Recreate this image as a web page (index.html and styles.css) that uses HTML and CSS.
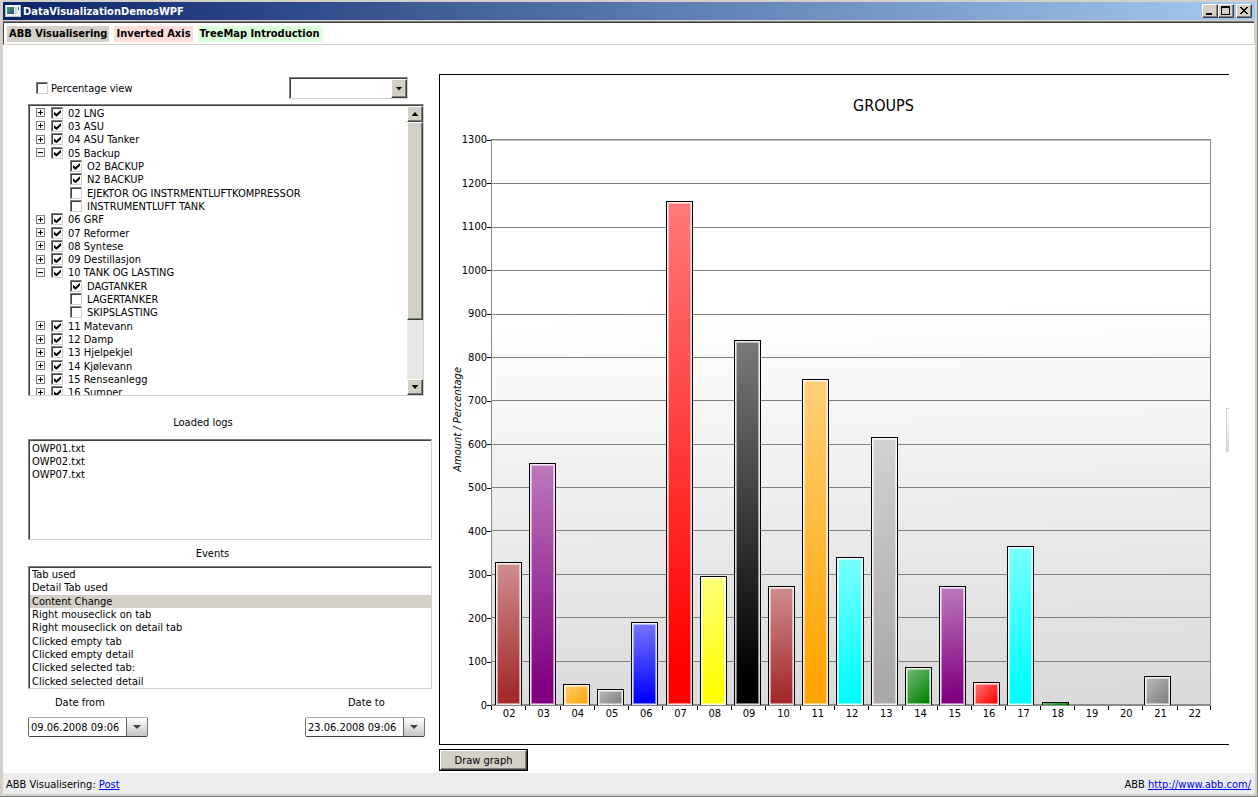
FILE: index.html
```html
<!DOCTYPE html>
<html lang="no">
<head>
<meta charset="utf-8">
<title>DataVisualizationDemosWPF</title>
<link rel="stylesheet" href="styles.css">
</head>
<body>
<div class="window">
  <header class="titlebar">
    <svg class="app-icon" width="16" height="12" viewBox="0 0 16 12" shape-rendering="crispEdges" aria-hidden="true">
      <defs><linearGradient id="pane" x1="0" y1="0" x2="1" y2="1"><stop offset="0" stop-color="#4aa070"/><stop offset="1" stop-color="#1f4f86"/></linearGradient></defs>
      <rect width="16" height="12" fill="#f4f4f4"/>
      <path d="M0 11.500H16M15.500 0V12M0.500 0V12" stroke="#c4c4c4"/>
      <rect x="2" y="2" width="7" height="7" fill="url(#pane)"/>
      <rect x="10" y="2" width="2" height="7" fill="#c9d6e4"/>
      <rect x="13" y="2" width="1" height="3" fill="#3569a8"/>
    </svg>
    <h1 class="title">DataVisualizationDemosWPF</h1>
    <button class="win-btn" type="button" aria-label="Minimize"><svg width="12" height="10" shape-rendering="crispEdges"><rect x="2" y="7" width="6" height="2"/></svg></button>
    <button class="win-btn" type="button" aria-label="Maximize"><svg width="12" height="10" shape-rendering="crispEdges"><path d="M1 0h9v9h-9zM2 2v6h7v-6z" fill-rule="evenodd"/></svg></button>
    <button class="win-btn win-close" type="button" aria-label="Close"><svg width="12" height="10" shape-rendering="crispEdges"><path d="M2 1h2v1h1v1h2v-1h1v-1h2v1h-1v1h-1v1h-1v1h1v1h1v1h1v1h-2v-1h-1v-1h-2v1h-1v1h-2v-1h1v-1h1v-1h1v-1h-1v-1h-1v-1h-1z"/></svg></button>
  </header>

  <nav class="tabs">
    <button class="tab tab-active" type="button">ABB Visualisering</button>
    <button class="tab tab-pink" type="button">Inverted Axis</button>
    <button class="tab tab-green" type="button">TreeMap Introduction</button>
  </nav>

  <main class="main">
    <section class="side">
      <div class="options">
        <label class="option"><input class="check" type="checkbox"><span class="option-text">Percentage view</span></label>
        <div class="combo sunken">
          <select class="combo-select" aria-label="Series"><option></option></select>
          <span class="combo-arrow raised"><i class="arrow arrow-down"></i></span>
        </div>
      </div>

      <div class="tree sunken">
        <ul class="tree-list">
          <li class="node"><button class="expander plus" type="button" aria-label="Expand"></button><label class="node-label"><input class="check" type="checkbox" checked>02 LNG</label></li>
          <li class="node"><button class="expander plus" type="button" aria-label="Expand"></button><label class="node-label"><input class="check" type="checkbox" checked>03 ASU</label></li>
          <li class="node"><button class="expander plus" type="button" aria-label="Expand"></button><label class="node-label"><input class="check" type="checkbox" checked>04 ASU Tanker</label></li>
          <li class="node"><button class="expander" type="button" aria-label="Collapse"></button><label class="node-label"><input class="check" type="checkbox" checked>05 Backup</label></li>
          <li class="node child"><label class="node-label"><input class="check" type="checkbox" checked>O2 BACKUP</label></li>
          <li class="node child"><label class="node-label"><input class="check" type="checkbox" checked>N2 BACKUP</label></li>
          <li class="node child"><label class="node-label"><input class="check" type="checkbox">EJEKTOR OG INSTRMENTLUFTKOMPRESSOR</label></li>
          <li class="node child"><label class="node-label"><input class="check" type="checkbox">INSTRUMENTLUFT TANK</label></li>
          <li class="node"><button class="expander plus" type="button" aria-label="Expand"></button><label class="node-label"><input class="check" type="checkbox" checked>06 GRF</label></li>
          <li class="node"><button class="expander plus" type="button" aria-label="Expand"></button><label class="node-label"><input class="check" type="checkbox" checked>07 Reformer</label></li>
          <li class="node"><button class="expander plus" type="button" aria-label="Expand"></button><label class="node-label"><input class="check" type="checkbox" checked>08 Syntese</label></li>
          <li class="node"><button class="expander plus" type="button" aria-label="Expand"></button><label class="node-label"><input class="check" type="checkbox" checked>09 Destillasjon</label></li>
          <li class="node"><button class="expander" type="button" aria-label="Collapse"></button><label class="node-label"><input class="check" type="checkbox" checked>10 TANK OG LASTING</label></li>
          <li class="node child"><label class="node-label"><input class="check" type="checkbox" checked>DAGTANKER</label></li>
          <li class="node child"><label class="node-label"><input class="check" type="checkbox">LAGERTANKER</label></li>
          <li class="node child"><label class="node-label"><input class="check" type="checkbox">SKIPSLASTING</label></li>
          <li class="node"><button class="expander plus" type="button" aria-label="Expand"></button><label class="node-label"><input class="check" type="checkbox" checked>11 Matevann</label></li>
          <li class="node"><button class="expander plus" type="button" aria-label="Expand"></button><label class="node-label"><input class="check" type="checkbox" checked>12 Damp</label></li>
          <li class="node"><button class="expander plus" type="button" aria-label="Expand"></button><label class="node-label"><input class="check" type="checkbox" checked>13 Hjelpekjel</label></li>
          <li class="node"><button class="expander plus" type="button" aria-label="Expand"></button><label class="node-label"><input class="check" type="checkbox" checked>14 Kjølevann</label></li>
          <li class="node"><button class="expander plus" type="button" aria-label="Expand"></button><label class="node-label"><input class="check" type="checkbox" checked>15 Renseanlegg</label></li>
          <li class="node"><button class="expander plus" type="button" aria-label="Expand"></button><label class="node-label"><input class="check" type="checkbox" checked>16 Sumper</label></li>
        </ul>
        <div class="scrollbar">
          <button class="scroll-btn raised" type="button" aria-label="Scroll up"><i class="arrow arrow-up"></i></button>
          <div class="scroll-track"><div class="scroll-thumb raised"></div></div>
          <button class="scroll-btn raised" type="button" aria-label="Scroll down"><i class="arrow arrow-down"></i></button>
        </div>
      </div>

      <h2 class="caption caption-logs">Loaded logs</h2>
      <ul class="list logs sunken">
        <li class="row">OWP01.txt</li>
        <li class="row">OWP02.txt</li>
        <li class="row">OWP07.txt</li>
      </ul>

      <h2 class="caption caption-events">Events</h2>
      <ul class="list events sunken">
        <li class="row">Tab used</li>
        <li class="row">Detail Tab used</li>
        <li class="row selected">Content Change</li>
        <li class="row">Right mouseclick on tab</li>
        <li class="row">Right mouseclick on detail tab</li>
        <li class="row">Clicked empty tab</li>
        <li class="row">Clicked empty detail</li>
        <li class="row">Clicked selected tab:</li>
        <li class="row">Clicked selected detail</li>
      </ul>

      <div class="dates">
        <div class="date">
          <label class="date-label date-label-from" for="from">Date from</label>
          <div class="date-box"><input class="date-input" id="from" type="text" value="09.06.2008 09:06"><button class="date-btn" type="button" aria-label="Choose start date"><i class="date-arrow"></i></button></div>
        </div>
        <div class="date">
          <label class="date-label date-label-to" for="to">Date to</label>
          <div class="date-box"><input class="date-input" id="to" type="text" value="23.06.2008 09:06"><button class="date-btn" type="button" aria-label="Choose end date"><i class="date-arrow"></i></button></div>
        </div>
      </div>
    </section>

    <section class="content">
      <div class="chart">
        <h2 class="chart-title">GROUPS</h2>
        <div class="chart-body">
          <div class="y-title">Amount / Percentage</div>
          <ol class="y-axis">
            <li>1300</li><li>1200</li><li>1100</li><li>1000</li><li>900</li><li>800</li><li>700</li><li>600</li><li>500</li><li>400</li><li>300</li><li>200</li><li>100</li><li>0</li>
          </ol>
          <div class="plot">
            <div class="gridlines"><i></i><i></i><i></i><i></i><i></i><i></i><i></i><i></i><i></i><i></i><i></i><i></i><i></i></div>
            <div class="bars">
              <div class="bar brown" style="--value:330"></div>
              <div class="bar purple" style="--value:557"></div>
              <div class="bar orange short" style="--value:48"></div>
              <div class="bar gray short" style="--value:37"></div>
              <div class="bar blue" style="--value:191"></div>
              <div class="bar red" style="--value:1160"></div>
              <div class="bar yellow" style="--value:297"></div>
              <div class="bar black" style="--value:840"></div>
              <div class="bar brown" style="--value:274"></div>
              <div class="bar orange" style="--value:750"></div>
              <div class="bar cyan" style="--value:341"></div>
              <div class="bar silver" style="--value:617"></div>
              <div class="bar green short" style="--value:88"></div>
              <div class="bar purple" style="--value:274"></div>
              <div class="bar red short" style="--value:53"></div>
              <div class="bar cyan" style="--value:366"></div>
              <div class="bar green sliver" style="--value:6"></div>
              <div class="bar empty"></div>
              <div class="bar empty"></div>
              <div class="bar gray short" style="--value:67"></div>
              <div class="bar empty"></div>
            </div>
          </div>
          <ol class="x-axis">
            <li>02</li><li>03</li><li>04</li><li>05</li><li>06</li><li>07</li><li>08</li><li>09</li><li>10</li><li>11</li><li>12</li><li>13</li><li>14</li><li>15</li><li>16</li><li>17</li><li>18</li><li>19</li><li>20</li><li>21</li><li>22</li>
          </ol>
          <div class="legend-edge"></div>
        </div>
      </div>
      <button class="draw" type="button"><span class="draw-face raised">Draw graph</span></button>
    </section>
  </main>

  <footer class="status">
    <span>ABB Visualisering: <a class="link" href="#post">Post</a></span>
    <span>ABB <a class="link" href="http://www.abb.com/">http://www.abb.com/</a></span>
  </footer>
</div>
</body>
</html>
```

FILE: styles.css
```css
* { box-sizing: border-box; }

body {
  margin: 0;
  font-family: "DejaVu Sans Condensed", "Noto Sans", sans-serif;
  font-size: 11px;
  line-height: 14px;
  color: #000;
  background: #fff;
}

h1, h2, ul, ol { margin: 0; padding: 0; list-style: none; font-weight: normal; }
button, input, select { margin: 0; padding: 0; border: 0; border-radius: 0; font: inherit; color: inherit; }

.window {
  display: flex;
  flex-direction: column;
  min-height: 100vh;
  padding: 2px 2px 2px 3px;
  background: #d4d0c8;
  border-right: 1px solid #808080;
  border-bottom: 1px solid #808080;
}

/* 3D edges */
.sunken {
  border: 1px solid;
  border-color: #808080 #d4d0c8 #d4d0c8 #808080;
  box-shadow: inset 1px 1px 0 #404040;
  padding: 1px 0 0 1px;
  background: #fff;
}
.raised {
  background: #d4d0c8;
  border: 1px solid;
  border-color: #fff #404040 #404040 #fff;
  box-shadow: inset -1px -1px 0 #808080;
}

/* Title bar */
.titlebar {
  display: flex;
  align-items: center;
  height: 18px;
  padding: 0 3px 0 2px;
  background: linear-gradient(90deg, #0a246a, #a6caf0);
}
.app-icon { flex: none; margin-right: 2px; }
.title { flex: 1; padding-top: 2px; font-size: 11px; font-weight: bold; color: #fff; }
.win-btn {
  display: grid;
  place-items: center;
  width: 16px;
  height: 14px;
  background: #d4d0c8;
  border: 1px solid;
  border-color: #fff #404040 #404040 #fff;
  box-shadow: inset -1px -1px 0 #808080;
}
.win-close { margin-left: 2px; }

/* Tabs */
.tabs {
  display: flex;
  gap: 5px;
  height: 24px;
  margin-top: 1px;
  padding: 4px 3px 2px;
  background: #fff;
  border: 1px solid;
  border-color: #808080 #d4d0c8 #d4d0c8 #404040;
  box-shadow: inset 0 1px 0 #404040;
}
.tab { height: 16px; padding: 0 2px; font-weight: bold; line-height: 16px; background: none; }
.tab-active { background: #d4d0c8; }
.tab-pink { background: #ffdcdc; }
.tab-green { background: #dcffdc; }

/* Page */
.main {
  flex: 1;
  display: flex;
  gap: 7px;
  padding: 29px 26px 2px 25px;
  background: #fff;
}
.side { flex: none; width: 404px; padding-top: 3px; }

.options { display: flex; justify-content: space-between; align-items: center; height: 22px; margin: 0 24px 5px 8px; }
.option { display: flex; align-items: center; gap: 3px; }
.option-text { padding-top: 2px; }
.combo { display: flex; width: 119px; height: 22px; padding: 1px 0 0 1px; }
.combo-select { flex: 1; min-width: 0; appearance: none; background: none; outline: none; }
.combo-arrow { display: grid; place-items: center; width: 16px; }

.check {
  flex: none;
  appearance: none;
  display: block;
  width: 12px;
  height: 12px;
  background: #fff;
  border: 1px solid;
  border-color: #808080 #d4d0c8 #d4d0c8 #808080;
  box-shadow: inset 1px 1px 0 #404040;
  padding: 2px;
}
.check:checked::before {
  content: "";
  display: block;
  width: 7px;
  height: 7px;
  background: #000;
  clip-path: polygon(0 29%, 36% 60%, 100% 0, 100% 40%, 36% 100%, 0 72%);
}

.arrow { width: 7px; height: 4px; background: #000; }
.arrow-down { clip-path: polygon(0 0, 100% 0, 50% 100%); }
.arrow-up { clip-path: polygon(0 100%, 100% 100%, 50% 0); }

/* Tree */
.tree { display: flex; height: 292px; margin-right: 8px; overflow: hidden; }
.tree-list { flex: 1; display: grid; grid-template-rows: repeat(22, 1fr); height: 293px; }
.node { display: flex; align-items: center; gap: 6px; min-height: 0; padding-left: 6px; }
.child { padding-left: 40px; }
.node-label { display: flex; align-items: flex-start; gap: 5px; height: 12px; white-space: nowrap; }
.expander {
  width: 9px;
  height: 9px;
  border: 1px solid #808080;
  background: linear-gradient(#000, #000) center / 5px 1px no-repeat, #fff;
}
.plus { background: linear-gradient(#000, #000) center / 5px 1px no-repeat, linear-gradient(#000, #000) center / 1px 5px no-repeat, #fff; }

.scrollbar { display: flex; flex-direction: column; width: 16px; }
.scroll-btn { display: grid; place-items: center; height: 16px; }
.scroll-track { flex: 1; background: #e9e7e3; }
.scroll-thumb { height: 77%; }

/* Lists */
.caption { font-size: 11px; text-align: center; }
.caption-logs { margin: 20px 54px 9px 0; }
.caption-events { margin: 7px 35px 5px 0; }
.list { display: grid; }
.logs { grid-auto-rows: 13px; align-content: start; height: 101px; padding-top: 2px; }
.events { grid-template-rows: repeat(9, 1fr); height: 123px; padding-top: 1px; }
.row { min-height: 0; padding-left: 2px; line-height: 13px; }
.selected { background: #d4d0c8; }

/* Dates */
.dates { display: flex; justify-content: space-between; margin: 7px 7px 0 0; }
.date { width: 120px; }
.date-label { display: block; margin-bottom: 7px; }
.date-label-from { padding-left: 27px; }
.date-label-to { padding-left: 43px; }
.date-box {
  display: flex;
  height: 20px;
  border: 1px solid;
  border-color: #ababab #707070 #404040;
  border-radius: 2px;
  overflow: hidden;
}
.date-input { flex: 1; min-width: 0; padding: 1px 0 0 2px; background: #fff; outline: none; }
.date-btn {
  display: grid;
  place-items: center;
  width: 21px;
  border-left: 1px solid #606060;
  background: linear-gradient(#fff, #c4c4c4);
}
.date-arrow { width: 8px; height: 4px; background: #404040; clip-path: polygon(0 0, 100% 0, 50% 100%); }

/* Chart */
.content { flex: 1; display: flex; flex-direction: column; align-items: flex-start; min-width: 0; }
.chart {
  flex: 1;
  align-self: stretch;
  display: flex;
  flex-direction: column;
  padding: 21px 0 18px 10px;
  border: 1px solid #000;
  border-right: 0;
}
.chart-title { padding-left: 88px; margin: 0 0 17px; font-size: 16px; line-height: 20px; text-align: center; }
.chart-body {
  flex: 1;
  display: grid;
  grid-template-columns: 15px 26px minmax(0, 1fr) 15px 3px;
  grid-template-rows: minmax(0, 1fr) 20px;
}
.y-title {
  grid-area: 1 / 1;
  place-self: center;
  writing-mode: vertical-rl;
  transform: rotate(180deg);
  font-style: italic;
  white-space: nowrap;
}
.y-axis {
  grid-area: 1 / 2;
  display: flex;
  flex-direction: column;
  justify-content: space-between;
  margin-bottom: -7px;
  margin-left: -4px;
}
.y-axis li { display: flex; align-items: center; justify-content: flex-end; height: 14px; }
.y-axis li::after { content: ""; flex: none; width: 4px; height: 1px; background: #000; }
.plot {
  grid-area: 1 / 3;
  display: grid;
  margin-top: 6px;
  border: 1px solid #8a8a8a;
  border-bottom-width: 2px;
  background: linear-gradient(178deg, #fff 30%, #d9d9d9);
}
.gridlines { grid-area: 1 / 1; display: grid; grid-template-rows: repeat(13, 1fr); }
.gridlines i { border-top: 1px solid #808080; }
.gridlines i:first-child { border-color: #c4c4c4; }
.bars {
  grid-area: 1 / 1;
  display: grid;
  grid-template-columns: repeat(21, 1fr);
  align-items: end;
  justify-items: center;
  margin: 0 1px -1px -1px;
}
.bar {
  width: 79%;
  height: calc(var(--value) / 1300 * 100%);
  border: 1px solid #000;
  border-bottom: 0;
  background-image: linear-gradient(172deg, rgba(255, 255, 255, 0.48), rgba(255, 255, 255, 0) 92%);
  box-shadow: inset 0 0 0 1px rgba(255, 255, 255, 0.7), inset 0 0 0 2px rgba(255, 255, 255, 0.5);
}
.short { background-image: linear-gradient(135deg, rgba(255, 255, 255, 0.48), rgba(255, 255, 255, 0) 92%); }
.sliver { box-shadow: none; }
.empty { visibility: hidden; height: 0; }
.brown { background-color: #a52a2a; }
.purple { background-color: #800080; }
.orange { background-color: #ffa500; }
.gray { background-color: #808080; }
.blue { background-color: #00f; }
.red { background-color: #f00; }
.yellow { background-color: #ff0; }
.black { background-color: #000; }
.cyan { background-color: #0ff; }
.silver { background-color: #a9a9a9; }
.green { background-color: #008000; }

.x-axis { grid-area: 2 / 3; display: grid; grid-template-columns: repeat(21, 1fr); height: 14px; }
.x-axis li {
  padding-left: 2px;
  line-height: 16px;
  text-align: center;
  background: linear-gradient(#000, #000) left top / 1px 4px no-repeat;
}
.x-axis li:last-child {
  background: linear-gradient(#000, #000) left top / 1px 4px no-repeat, linear-gradient(#000, #000) right top / 1px 4px no-repeat;
}
.legend-edge {
  grid-area: 1 / 5 / 3 / 6;
  align-self: center;
  height: 44px;
  border-left: 1px solid #d0d0d0;
  border-top: 1px solid #d0d0d0;
  background: linear-gradient(#fff, #d9d9d9);
}

.draw { height: 22px; margin-top: 4px; padding: 0; border: 1px solid #000; background: #d4d0c8; }
.draw-face { display: block; width: 87px; height: 20px; line-height: 20px; text-align: center; }

/* Status bar */
.status {
  display: flex;
  justify-content: space-between;
  height: 21px;
  padding: 0 4px 0 3px;
  line-height: 23px;
  background: #ededed;
}
.link { color: #00f; text-decoration: underline; }
```
